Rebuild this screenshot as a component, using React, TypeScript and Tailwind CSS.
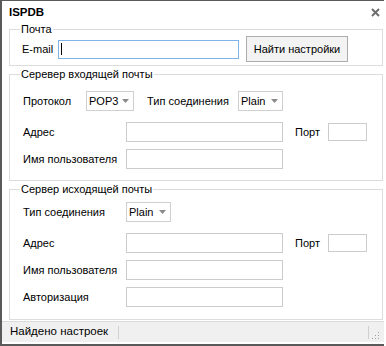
import React from "react";

function Field({ className }: { className: string }) {
  return <div className={"border border-[#cccccc] bg-white shrink-0 " + className} />;
}

function Combo({ text, className }: { text: string; className: string }) {
  return (
    <div className={"flex items-center justify-between border border-[#cfcfcf] bg-white pl-[2px] pr-[4px] shrink-0 " + className}>
      <span>{text}</span>
      <svg width="7" height="4" viewBox="0 0 7 4">
        <path d="M0 0H7L3.5 4Z" fill="#8a8a8a" />
      </svg>
    </div>
  );
}

function Group({ title, className, children }: { title: string; className: string; children: React.ReactNode }) {
  return (
    <fieldset className={"w-[374px] border border-[#dcdcdc] ml-[7px] " + className}>
      <legend className="ml-[10px] px-[1px] text-[11px] leading-[12px]">{title}</legend>
      {children}
    </fieldset>
  );
}

export default function App() {
  return (
    <div className="w-[386px] h-[346px] bg-white font-['Liberation_Sans',Arial,sans-serif] text-[11px] text-black whitespace-nowrap">
      <div className="w-[384px] h-[346px] border-t border-l-2 border-b-2 border-[#5a5a5a] flex flex-col">
        {/* Title bar */}
        <div className="h-[22px] flex items-center justify-between pl-[7px] pr-[4px] shrink-0">
          <span className="font-bold text-[11.5px] leading-[12px]">ISPDB</span>
          <svg width="9" height="9" viewBox="0 0 9 9">
            <path d="M1 1L8 8M8 1L1 8" stroke="#6e6e6e" strokeWidth="2" />
          </svg>
        </div>

        {/* Почта */}
        <Group title="Почта" className="pb-[3px]">
          <div className="flex items-center pl-[12px] mt-[1px] h-[26px]">
            <span className="w-[36px]">E-mail</span>
            <div className="w-[181px] h-[19px] border border-[#7eb4ea] bg-white flex items-center pl-[2px]">
              <div className="w-px h-[12px] bg-black" />
            </div>
            <button className="ml-[7px] w-[102px] h-[26px] border border-[#adadad] bg-[#f3f3f3] flex items-center justify-center">
              Найти настройки
            </button>
          </div>
        </Group>

        {/* Входящая */}
        <Group title="Серевер входящей почты" className="mt-[2px] pb-[11px]">
          <div className="pl-[13px] flex flex-col">
            <div className="flex items-center h-[20px] mt-[11px]">
              <span className="w-[63px]">Протокол</span>
              <Combo text="POP3" className="w-[48px] h-[20px]" />
              <span className="ml-[13px] w-[91px]">Тип соединения</span>
              <Combo text="Plain" className="w-[45px] h-[20px]" />
            </div>
            <div className="flex items-center h-[20px] mt-[11px]">
              <span className="w-[103px]">Адрес</span>
              <Field className="w-[157px] h-[20px]" />
              <span className="ml-[12px] w-[33px]">Порт</span>
              <Field className="w-[39px] h-[18px]" />
            </div>
            <div className="flex items-center h-[20px] mt-[7px]">
              <span className="w-[103px]">Имя пользователя</span>
              <Field className="w-[157px] h-[20px]" />
            </div>
          </div>
        </Group>

        {/* Исходящая */}
        <Group title="Сервер исходящей почты" className="mt-[2px] pb-[12px]">
          <div className="pl-[13px] flex flex-col">
            <div className="flex items-center h-[20px] mt-[7px]">
              <span className="w-[103px]">Тип соединения</span>
              <Combo text="Plain" className="w-[45px] h-[20px]" />
            </div>
            <div className="flex items-center h-[20px] mt-[11px]">
              <span className="w-[103px]">Адрес</span>
              <Field className="w-[157px] h-[20px]" />
              <span className="ml-[12px] w-[33px]">Порт</span>
              <Field className="w-[39px] h-[18px]" />
            </div>
            <div className="flex items-center h-[20px] mt-[7px]">
              <span className="w-[103px]">Имя пользователя</span>
              <Field className="w-[157px] h-[20px]" />
            </div>
            <div className="flex items-center h-[20px] mt-[7px]">
              <span className="w-[103px]">Авторизация</span>
              <Field className="w-[157px] h-[20px]" />
            </div>
          </div>
        </Group>

        {/* Status bar */}
        <div className="mt-auto mb-[2px] h-[21px] border-t border-[#dadada] bg-[#f0f0f0] flex items-center pl-[8px] pr-[4px] text-[11.5px]">
          <span className="w-[108px]">Найдено настроек</span>
          <div className="w-px h-[13px] bg-[#d0d0d0]" />
          <div className="flex-1" />
          <div className="w-px h-[13px] bg-[#d0d0d0]" />
          <svg className="ml-[3px] mt-[6px]" width="8" height="8" viewBox="0 0 8 8">
            <rect x="6" y="1" width="1" height="1" fill="#a0a0a0" />
            <rect x="3" y="4" width="1" height="1" fill="#a0a0a0" />
            <rect x="6" y="4" width="1" height="1" fill="#a0a0a0" />
            <rect x="0" y="7" width="1" height="1" fill="#a0a0a0" />
            <rect x="3" y="7" width="1" height="1" fill="#a0a0a0" />
            <rect x="6" y="7" width="1" height="1" fill="#a0a0a0" />
          </svg>
        </div>
      </div>
    </div>
  );
}
